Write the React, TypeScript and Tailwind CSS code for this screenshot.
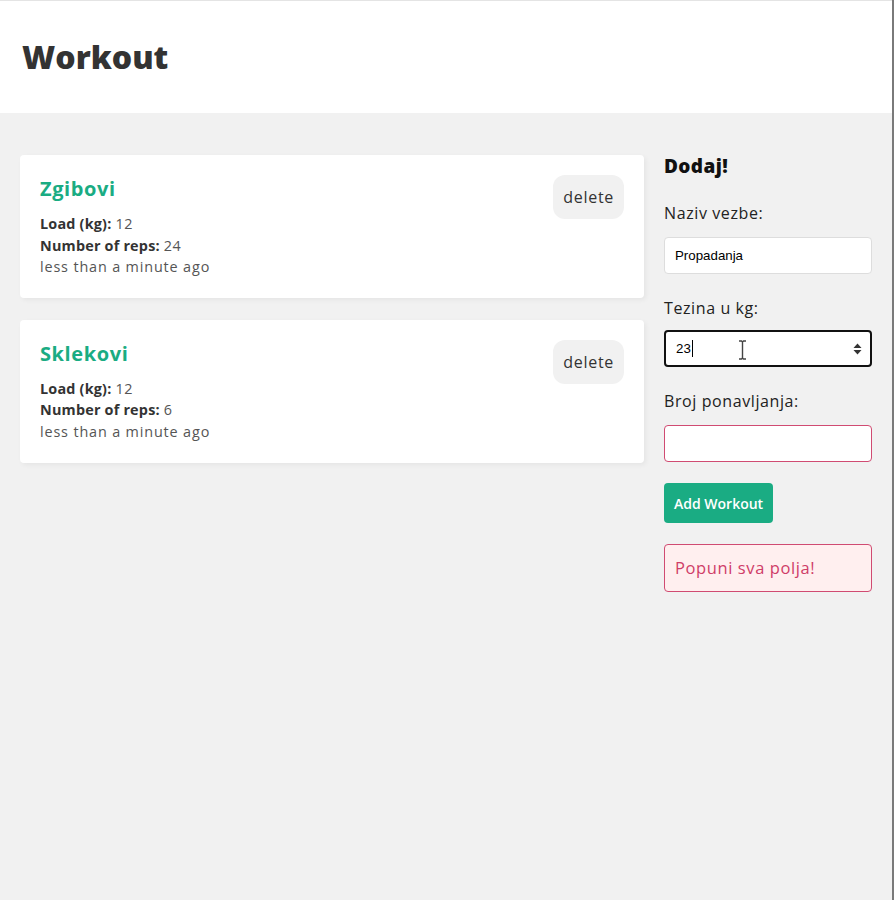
import React from "react";

const workouts = [
  { title: "Zgibovi", load: 12, reps: 24, time: "less than a minute ago" },
  { title: "Sklekovi", load: 12, reps: 6, time: "less than a minute ago" },
];

function WorkoutDetails({ title, load, reps, time }: { title: string; load: number; reps: number; time: string }) {
  return (
    <div className="relative rounded bg-white p-5 shadow-[2px_2px_5px_rgba(0,0,0,0.05)]">
      <h4 className="mb-2.5 text-[20px] leading-[28px] font-bold tracking-[0.6px] text-[#1aac83]">{title}</h4>
      <p className="text-[14.4px] leading-[21.6px] tracking-[0.55px] text-[#555]">
        <strong className="tracking-[0.2px] text-[#333]">Load (kg): </strong>
        {load}
      </p>
      <p className="text-[14.4px] leading-[21.6px] tracking-[0.55px] text-[#555]">
        <strong className="tracking-[0.2px] text-[#333]">Number of reps: </strong>
        {reps}
      </p>
      <p className="text-[14.4px] leading-[21.6px] tracking-[0.85px] text-[#555]">{time}</p>
      <span className="absolute top-5 right-5 cursor-pointer rounded-xl bg-[#f1f1f1] p-2.5 text-base leading-6 tracking-[0.7px] text-[#333]">
        delete
      </span>
    </div>
  );
}

export default function App() {
  return (
    <div className="min-h-screen border-r-2 border-[#7a7a7a] bg-[#f1f1f1] font-['Open_Sans',sans-serif]">
      {/* Header */}
      <header className="flex h-[113px] items-center border-t border-[#e4e4e4] bg-white px-[22px]">
        <h1 className="text-[32px] leading-none font-extrabold text-[#333]">Workout</h1>
      </header>

      {/* Page */}
      <div className="grid grid-cols-[3fr_1fr] gap-5 p-5">
        <div className="flex flex-col gap-[22px] pt-[22px]">
          {workouts.map((w, i) => (
            <WorkoutDetails key={i} {...w} />
          ))}
        </div>

        <form className="flex flex-col text-[#222]" onSubmit={(e) => e.preventDefault()}>
          <h3 className="mt-[19px] mb-[19px] text-[19px] leading-[28px] font-extrabold tracking-[0.4px] text-[#111]">Dodaj!</h3>

          <label className="block text-base leading-[28px] tracking-[0.6px]">Naziv vezbe:</label>
          <input
            type="text"
            readOnly
            value="Propadanja"
            className="mt-2.5 mb-5 block h-[37px] w-full rounded border border-[#ddd] bg-white px-2.5 font-['Liberation_Sans',Arial,sans-serif] text-[13.3px] text-black outline-none"
          />

          <label className="block text-base leading-[28px] tracking-[0.6px]">Tezina u kg:</label>
          <div className="relative mt-2 mb-5 flex h-[37px] w-full items-center rounded border-2 border-[#111] bg-white pr-2 pl-[10px] font-['Liberation_Sans',Arial,sans-serif] text-[13.3px] text-black">
            <span>23</span>
            <span className="ml-px h-[17px] w-px bg-black" />
            <span className="flex-1" />
            <svg width="9" height="12" viewBox="0 0 9 12" className="text-[#333]">
              <path d="M4.5 0.5 L8.5 5 L0.5 5 Z" fill="currentColor" />
              <path d="M4.5 11.5 L8.5 7 L0.5 7 Z" fill="currentColor" />
            </svg>
            {/* mouse cursor */}
            <svg
              width="9"
              height="20"
              viewBox="0 0 9 20"
              className="pointer-events-none absolute top-[8px] left-[72px] text-[#444]"
            >
              <path
                d="M1 1 H3.5 L4.5 2 L5.5 1 H8 M4.5 2 V18 M1 19 H3.5 L4.5 18 L5.5 19 H8"
                stroke="currentColor"
                strokeWidth="1.4"
                fill="none"
              />
            </svg>
          </div>

          <label className="block text-base leading-[28px] tracking-[0.6px]">Broj ponavljanja:</label>
          <input
            type="text"
            readOnly
            value=""
            className="mt-2.5 mb-[21px] block h-[37px] w-full rounded border border-[#d04b72] bg-white px-2.5 text-[13.3px] outline-none"
          />

          <div>
            <button className="h-10 cursor-pointer rounded bg-[#1aac83] px-2.5 text-[14px] font-semibold text-white">
              Add Workout
            </button>
          </div>

          <div className="mt-[21px] rounded border border-[#d04b72] bg-[#ffefef] px-2.5 py-[10px] text-[16.5px] leading-[26px] tracking-[0.6px] text-[#cf3d68]">
            Popuni sva polja!
          </div>
        </form>
      </div>
    </div>
  );
}
